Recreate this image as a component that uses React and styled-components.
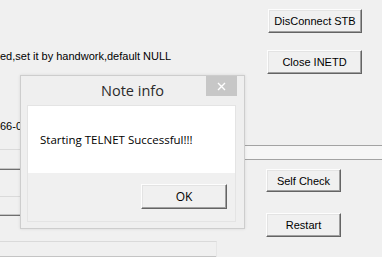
import React from 'react';
import styled, { createGlobalStyle } from 'styled-components';

const GlobalStyle = createGlobalStyle`
  html, body {
    margin: 0;
    padding: 0;
    background: #f0f0f0;
  }

  body {
    font-family: "Liberation Sans", Arial, sans-serif;
  }
`;

const Screen = styled.div`
  position: relative;
  box-sizing: border-box;
  width: 382px;
  height: 257px;
  padding-top: 9px;
  overflow: hidden;
  background: #f0f0f0;
`;

const Row = styled.div`
  display: flex;
  justify-content: ${(p) => p.justify || 'space-between'};
  align-items: flex-start;
  margin-top: ${(p) => p.top || 0}px;
  padding-right: ${(p) => p.right || 0}px;
`;

const Label = styled.div`
  font-size: 11px;
  line-height: 13px;
  color: #000;
  white-space: nowrap;
`;

const WinButton = styled.button`
  box-sizing: border-box;
  width: ${(p) => p.w}px;
  height: ${(p) => p.h || 24}px;
  margin: ${(p) => p.top || 0}px 0 0 ${(p) => p.left || 0}px;
  padding: 0;
  flex: none;
  font-family: "Liberation Sans", Arial, sans-serif;
  font-size: 11px;
  color: #000;
  background: #f0f0f0;
  border: 1px solid;
  border-color: #fdfdfd #646464 #646464 #fdfdfd;
  box-shadow: inset -1px -1px 0 #a0a0a0, inset 1px 1px 0 #e3e3e3;
`;

const Lower = styled.div`
  display: flex;
  margin-top: 8px;
`;

const LeftCol = styled.div`
  width: 235px;
  display: flex;
  flex-direction: column;
`;

const RightCol = styled.div`
  flex: 1;
  display: flex;
  flex-direction: column;
  align-items: flex-start;
`;

const Edit = styled.div`
  box-sizing: border-box;
  width: ${(p) => p.w || 235}px;
  height: ${(p) => p.h}px;
  margin-top: ${(p) => p.top}px;
  border-top: 1px solid #dadada;
  border-bottom: 1px solid #6f6f6f;
  border-right: ${(p) => (p.edge ? '1px solid #e6e6e6' : 'none')};
  box-shadow: inset 0 -1px 0 #c4c4c4;
`;

const Strip = styled.div`
  box-sizing: border-box;
  align-self: stretch;
  height: 15px;
  margin-top: 4px;
  border-top: 1px solid #a3a3a3;
  border-bottom: 1px solid #a3a3a3;
  background: #f6f6f6;
`;

const Dialog = styled.div`
  position: absolute;
  left: 20px;
  top: 75px;
  box-sizing: border-box;
  width: 225px;
  height: 154px;
  display: flex;
  flex-direction: column;
  background: #efefef;
  border: 1px solid #cdcdcd;
  box-shadow: 0 0 3px rgba(0, 0, 0, 0.1);
`;

const TitleBar = styled.div`
  position: relative;
  height: 29px;
  display: flex;
  align-items: center;
  justify-content: center;
  font-family: "Open Sans", "Noto Sans", sans-serif;
  font-size: 14.5px;
  color: #2b2b2b;
`;

const CloseBox = styled.div`
  position: absolute;
  right: 7px;
  top: 0;
  width: 31px;
  height: 20px;
  display: flex;
  align-items: center;
  justify-content: center;
  background: #c7c7c7;
`;

const Client = styled.div`
  height: 117px;
  margin: 0 8px 0 6px;
  display: flex;
  flex-direction: column;
  border: 1px solid #e4e4e4;
  box-sizing: border-box;
`;

const Message = styled.div`
  height: 67px;
  padding-left: 12px;
  display: flex;
  align-items: center;
  background: #fff;
  font-family: "Open Sans", "Noto Sans", sans-serif;
  font-size: 11.5px;
  color: #000;
`;

const Footer = styled.div`
  flex: 1;
  display: flex;
  justify-content: flex-end;
  align-items: flex-start;
  padding: 11px 8px 0 0;
  background: #f0f0f0;
`;

const OkButton = styled(WinButton)`
  font-family: "Open Sans", "Noto Sans", sans-serif;
  font-size: 12px;
`;

const CloseIcon = () => (
  <svg width="9" height="9" viewBox="0 0 9 9">
    <path d="M1 1 L8 8 M8 1 L1 8" stroke="#fff" strokeWidth="1.4" />
  </svg>
);

export default function App() {
  return (
    <>
      <GlobalStyle />
      <Screen>
        <Row justify="flex-end" right={20}>
          <WinButton w={94}>DisConnect STB</WinButton>
        </Row>
        <Row top={17} right={20}>
          <Label>ed,set it by handwork,default NULL</Label>
          <WinButton w={95}>Close INETD</WinButton>
        </Row>
        <Row top={46}>
          <Label>66-00</Label>
        </Row>
        <Lower>
          <LeftCol>
            <Edit h={21} top={8} />
            <Edit h={20} top={26} />
            <Edit h={17} top={25} w={217} edge />
          </LeftCol>
          <RightCol>
            <Strip />
            <WinButton w={75} h={23} top={9} left={31}>
              Self Check
            </WinButton>
            <WinButton w={75} h={24} top={21} left={31}>
              Restart
            </WinButton>
          </RightCol>
        </Lower>

        <Dialog>
          <TitleBar>
            Note info
            <CloseBox>
              <CloseIcon />
            </CloseBox>
          </TitleBar>
          <Client>
            <Message>Starting TELNET Successful!!!</Message>
            <Footer>
              <OkButton w={86} h={25}>
                OK
              </OkButton>
            </Footer>
          </Client>
        </Dialog>
      </Screen>
    </>
  );
}
